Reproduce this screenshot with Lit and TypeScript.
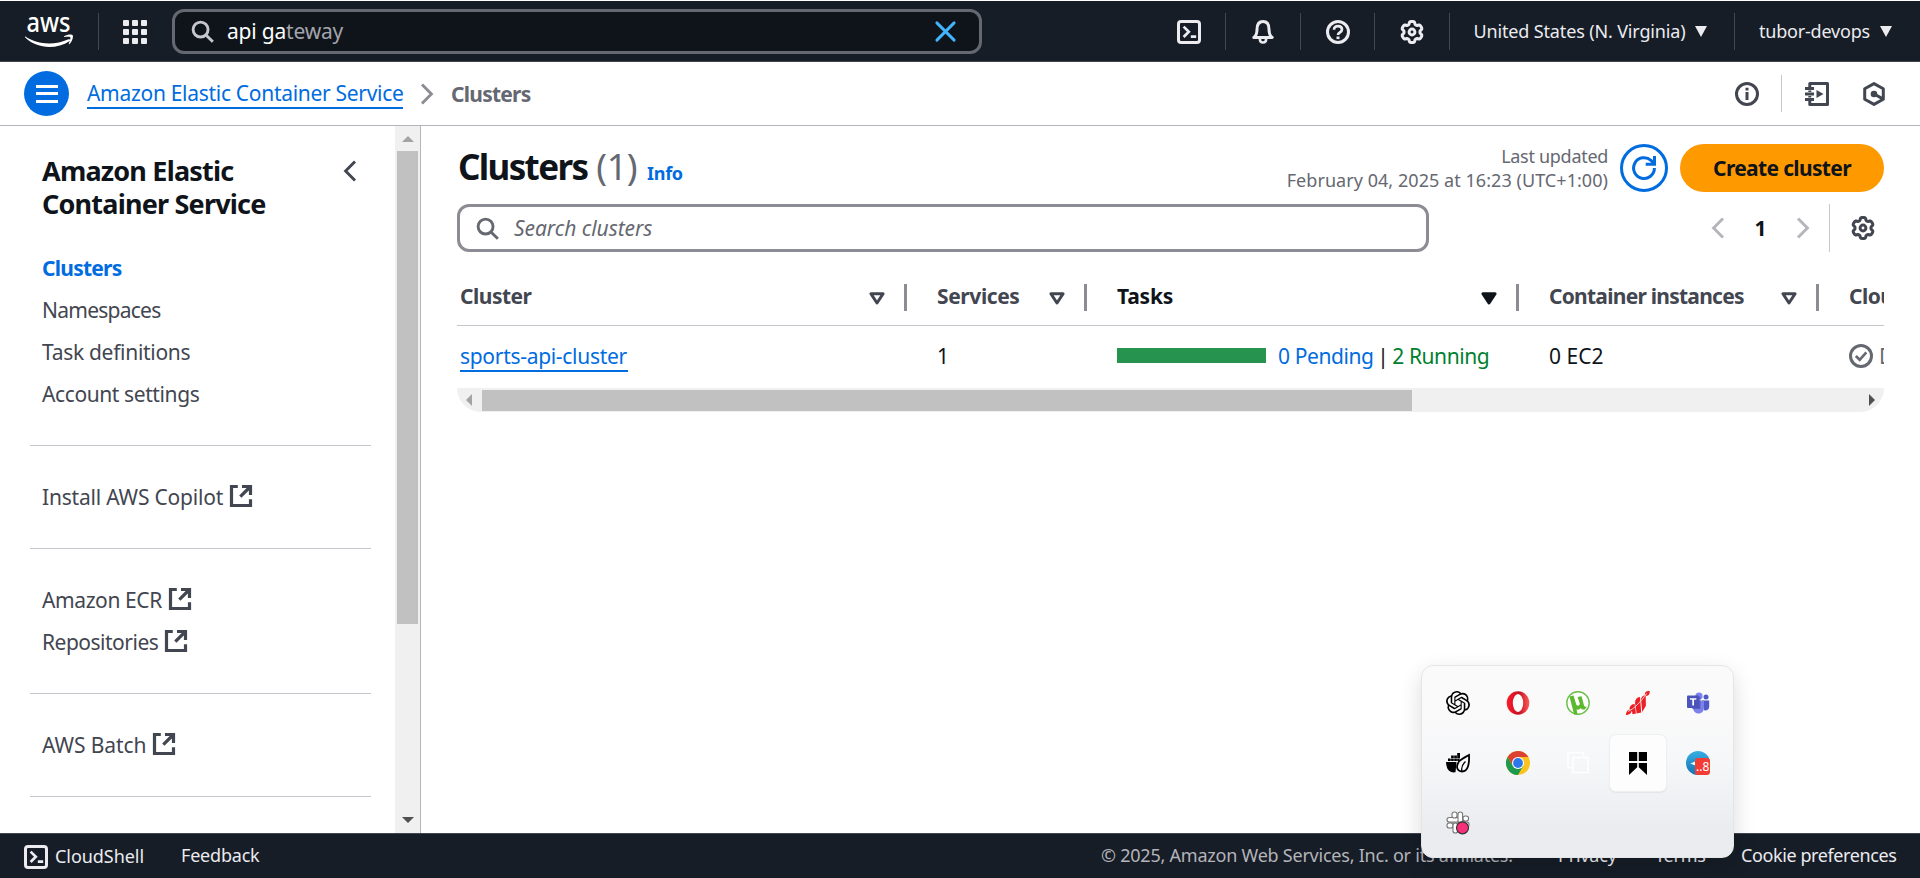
import { LitElement, html, css, svg, nothing } from "lit";
import { customElement } from "lit/decorators.js";

/** Outline of a gear with six rounded lobes, centred in a 24 unit box. */
const gearPath = (() => {
  const pts: string[] = [];
  for (let i = 0; i < 120; i++) {
    const a = (i / 120) * Math.PI * 2 - Math.PI / 2;
    const lobe = Math.tanh(2.2 * (Math.cos(6 * (a + Math.PI / 2)) + 0.25)) / Math.tanh(2.75);
    const r = 9.2 + 1.3 * lobe;
    pts.push(`${(12 + r * Math.cos(a)).toFixed(2)} ${(12 + r * Math.sin(a)).toFixed(2)}`);
  }
  return `M${pts.join("L")}Z`;
})();

const stroke = (body: unknown, w = 3) => html`<svg class="ic" viewBox="0 0 24 24" fill="none" stroke="currentColor" stroke-width=${w}>${body}</svg>`;

const icons = {
  search: stroke(svg`<circle cx="10" cy="10" r="7.8"/><path d="M15.300 15.300l7.500 7.500"/>`, 3),
  shell: stroke(svg`<rect x="1.5" y="1.5" width="21" height="21" rx="2.6"/><path d="M6.6 6.6l5.2 5.2-5.2 5.2M13.8 16.7h5.4" stroke-width="2.7"/>`),
  bell: stroke(svg`<path stroke-linejoin="round" d="M2.8 17.4C5.2 15.6 6 13.6 6 9.4 6 4.6 8.2 1.6 12 1.6s6 3 6 7.8c0 4.2.8 6.2 3.2 8z"/><path d="M8.8 18.5c0 2.7 1.2 4 3.2 4s3.2-1.3 3.2-4" stroke-width="2.6"/>`),
  help: stroke(svg`<circle cx="12" cy="12" r="10.5"/><path d="M8 9.8C8 7.4 9.6 6.2 12 6.2s4 1.3 4 3.4c0 2.700-4 2.900-4 5.400" stroke-width="2.700"/><path d="M10.500 17.800h3" stroke-width="2.600"/>`),
  gear: stroke(svg`<path d=${gearPath} stroke-linejoin="round"/><circle cx="12" cy="12" r="2.9"/>`, 3),
  info: stroke(svg`<circle cx="12" cy="12" r="10.5"/><path d="M12 10v8M12 5.800v2.600"/>`),
  notebook: stroke(svg`<path stroke-linejoin="round" d="M4.8 5V1.500h17.700v21H4.800V19M4.800 8.500v1.500M4.800 14v1.500" /><path d="M0 6.500h9M0 12h9M0 17.500h9" stroke-width="2.800"/><path d="M11.500 8v8l7-4z" fill="currentColor" stroke="none"/>`, 3),
  hex: stroke(svg`<path stroke-linejoin="round" d="M12 1.600l9.300 5.100v10.600L12 22.400l-9.300-5.100V6.700z"/><circle cx="12" cy="12" r="3.300" fill="currentColor" stroke="none"/><path d="M12 12l8.500 4.600"/>`),
  left: stroke(svg`<path d="M17 2.500L7.600 12l9.400 9.500"/>`, 2.9),
  right: stroke(svg`<path d="M7 2.500l9.400 9.500L7 21.500"/>`, 2.9),
  external: stroke(svg`<path d="M8.800 2.500H2.500v19h19v-6.300"/><path d="M13 2.500h8.500V11M21 3L11.300 12.700"/>`, 3.2),
  refresh: stroke(svg`<path d="M22.400 12A10.400 10.400 0 1 1 19 4.400l3 3"/><path d="M22.500 0v8.300h-8.800"/>`),
  check: stroke(svg`<circle cx="12" cy="12" r="10.500"/><path d="M6.800 12l3.900 3.800 6.600-7.400" stroke-width="2.600"/>`),
  close: stroke(svg`<path stroke-linecap="round" d="M3 3l18 18M21 3L3 21"/>`, 3),
};

const caret = html`<svg class="caret" viewBox="0 0 12 11"><path d="M0 0h12L6 11z" fill="currentColor"/></svg>`;
const sortCaret = (active: boolean) => html`<svg class="sort" viewBox="0 0 16 13"><path d="M1.900 1.700h12.200L8 11z" fill=${active ? "currentColor" : "none"} stroke="currentColor" stroke-width="3" stroke-linejoin="round"/></svg>`;

const tray = [
  svg`<path d="M22.280 9.820a5.985 5.985 0 0 0-.516-4.911 6.046 6.046 0 0 0-6.510-2.900A6.065 6.065 0 0 0 4.981 4.182a5.985 5.985 0 0 0-3.998 2.900 6.046 6.046 0 0 0 .743 7.097 5.980 5.980 0 0 0 .511 4.911 6.051 6.051 0 0 0 6.515 2.900A5.985 5.985 0 0 0 13.260 24a6.056 6.056 0 0 0 5.772-4.206 5.989 5.989 0 0 0 3.998-2.900 6.056 6.056 0 0 0-.748-7.073zm-9.022 12.608a4.476 4.476 0 0 1-2.876-1.041l.142-.080 4.778-2.758a.795.795 0 0 0 .393-.681v-6.737l2.020 1.169a.071.071 0 0 1 .038.052v5.583a4.504 4.504 0 0 1-4.495 4.494zm-9.661-4.125a4.471 4.471 0 0 1-.535-3.014l.142.085 4.783 2.758a.771.771 0 0 0 .781 0l5.843-3.369v2.332a.080.080 0 0 1-.033.062L9.740 19.950a4.499 4.499 0 0 1-6.141-1.646zM2.341 7.896a4.485 4.485 0 0 1 2.366-1.973V11.600a.766.766 0 0 0 .388.677l5.814 3.354-2.020 1.169a.076.076 0 0 1-.071 0l-4.830-2.787A4.504 4.504 0 0 1 2.341 7.872zm16.596 3.856L13.104 8.364 15.119 7.200a.076.076 0 0 1 .071 0l4.830 2.791a4.494 4.494 0 0 1-.677 8.104v-5.677a.790.790 0 0 0-.407-.667zm2.011-3.023l-.142-.085-4.774-2.782a.776.776 0 0 0-.785 0L9.409 9.230V6.897a.066.066 0 0 1 .028-.062l4.830-2.787a4.499 4.499 0 0 1 6.680 4.660zM8.307 12.863l-2.020-1.164a.080.080 0 0 1-.038-.057V6.074a4.499 4.499 0 0 1 7.376-3.454l-.142.081L8.704 5.459a.795.795 0 0 0-.393.681zm1.098-2.365l2.602-1.500 2.607 1.500v2.999l-2.597 1.500-2.607-1.500z"/>`,
  svg`<defs><linearGradient id="op" x1="0" y1="0" x2="1" y2="0"><stop offset="0" stop-color="#ff1b2d"/><stop offset=".55" stop-color="#c4101f"/><stop offset="1" stop-color="#ff5a58"/></linearGradient></defs><ellipse cx="12" cy="12" rx="11.300" ry="11.700" fill="url(#op)"/><ellipse cx="12" cy="12" rx="5.200" ry="9" fill="#fafafa"/>`,
  svg`<circle cx="12" cy="12" r="11.200" fill="#fff" stroke="#6cc04a" stroke-width="1.400"/><path d="M3.500 5.500l4-1 2.700 8.800c.8 2.300 3.900 1.700 3.500-1L11.600 6l4-.8 2.200 8.500c.4 1.600 1.300 2.300 3.200 2l-2.300 2.800c-1.900.3-3.200-.2-4-1.600-1 1.500-2.500 2-4.200 1.600l1.200 5h-3.600z" fill="#5cb82c"/>`,
  svg`<path d="M0 24c0-3 1.500-5.800 5.500-5.800C6.500 21.500 3.500 24 0 24zM3.400 17.600c.6-3 2.600-4.600 5.200-4.600l1.400 9.500-3.600.700c0-2.800-.600-4.600-3-5.600zM9 12c0-3.500 1.800-5.600 5-5.900l1.200 15.300-4.500 1zM15 8c.6-2.700 2.600-4 4.700-3.700l.200 10.500-3.700 6.200zM18.800 3.600C18.800 1 20.800-.4 23.800.300 24 2.800 22.600 4.800 20.600 5z" fill="#ec2024"/><path d="M2 20.500C8 18 15.500 10 20.500 2.500" stroke="#fafafa" stroke-width=".8" fill="none"/>`,
  svg`<circle cx="13" cy="5" r="3.600" fill="#7b83eb"/><circle cx="20" cy="6" r="2.500" fill="#5059c9"/><path d="M16 9.500h7.200v6.200a3.700 3.700 0 0 1-5 3.500z" fill="#5059c9"/><path d="M7 9.500h11v7c0 3.700-2.200 6-5.500 6S7 20 7 16.500z" fill="#7b83eb"/><rect x="6" y="6" width="8.500" height="12" fill="#3b4399" opacity=".55"/><rect x="1" y="4.500" width="12.300" height="12.500" rx="1" fill="#4b53bc"/><path d="M4 8h6.300M7.150 8v6.500" stroke="#fff" stroke-width="1.700"/>`,
  svg`<path d="M0 11h10.500l-1 10.300C4 22 .5 19.500 0 11zM2 10V7.500h2.700V10zM5.100 10V7.500h2.700V10zM8.200 10V7.500h2.700V10zM5.100 7V4.500h2.700V7zM8.200 7V4.500h2.700V7zM11.200 7V2H14v5zM11.200 10V7.500H14L13 10z"/><path d="M23 4c.4 8-.6 16.500-7 16.500-3.500 0-5.500-2.600-4.800-6C12.200 9.500 16 8 23 4z" fill="#fafafa" stroke="#000" stroke-width="1.800"/><path d="M16 20.500c-1-4 .2-7 3.500-10" fill="none" stroke="#000" stroke-width="1.300"/>`,
  svg`<circle cx="12" cy="12" r="12" fill="#fcc31e"/><path d="M12 12L6.800 15 1.600 6A12 12 0 0 1 22.400 6H12z" fill="#dd4132"/><path d="M6.800 15L1.600 6A12 12 0 0 0 12 24l5.200-9z" fill="#1c9a50"/><circle cx="12" cy="12" r="6" fill="#fff"/><circle cx="12" cy="12" r="4.900" fill="#2b78ea"/>`,
  svg`<g fill="none" stroke="#fff" stroke-width="1.500"><path d="M6 16.500H2v-15h15.500V5"/><rect x="7" y="6.500" width="15" height="15"/></g>`,
  svg`<path d="M3 1h8.200v9H3zM12.800 1H21v9h-8.200zM3 12h8.200v4.300L3 24zM12.800 12H21v12l-8.200-7.700z"/>`,
  svg`<defs><linearGradient id="tg" x1="0" y1="0" x2="0" y2="1"><stop offset="0" stop-color="#37aee2"/><stop offset="1" stop-color="#1474b5"/></linearGradient></defs><circle cx="12" cy="12" r="12" fill="url(#tg)"/><path d="M4.500 12.500l6-2.500v5z" fill="#fff"/><rect x="9" y="7" width="15" height="17" rx="3.200" fill="#f23c34"/><text x="10" y="20" fill="#fff" font-size="12">..8</text>`,
  svg`<g fill="#fff" stroke="#777" stroke-width="1.100"><rect x="1" y="6.500" width="12" height="4.600" rx="2.300"/><rect x="12" y="1" width="4.600" height="11" rx="2.300"/><rect x="6" y="1" width="5" height="6" rx="2.300"/><rect x="17" y="5" width="5.500" height="5" rx="2.300"/><rect x="1" y="12" width="6" height="5" rx="2.300"/><rect x="7" y="12" width="4.600" height="10" rx="2.300"/><rect x="12" y="11" width="11" height="5" rx="2.300"/></g><circle cx="16.500" cy="16.800" r="6" fill="#f72f78" stroke="#333" stroke-width="1.200"/>`,
];

const columns = [
  { label: "Cluster", cls: "k5", sort: 1 },
  { label: "Services", cls: "k4", sort: 1 },
  { label: "Tasks", cls: "k2", sort: 2 },
  { label: "Container instances", cls: "k8", sort: 1 },
  { label: "CloudWatch monitoring", cls: "k5", sort: 0 },
];

const navGroups = [
  [
    { label: "Clusters", cls: "current k8", ext: false },
    { label: "Namespaces", cls: "k8", ext: false },
    { label: "Task definitions", cls: "k3", ext: false },
    { label: "Account settings", cls: "k4", ext: false },
  ],
  [{ label: "Install AWS Copilot", cls: "k2", ext: true }],
  [
    { label: "Amazon ECR", cls: "k4", ext: true },
    { label: "Repositories", cls: "k5", ext: true },
  ],
  [{ label: "AWS Batch", cls: "k1", ext: true }],
];

@customElement("app-root")
export class AppRoot extends LitElement {
  static styles = css`
    :host { display: flex; flex-direction: column; box-sizing: border-box; width: 1920px; height: 878px; padding-top: 1px; overflow: hidden; position: relative; background: #fff; color: #0f141a; font: 400 21px/30px "Noto Sans", "Open Sans", sans-serif; white-space: nowrap; }
    * { box-sizing: border-box; }
    svg { display: block; flex: none; overflow: visible; }
    .ic { width: 24px; height: 24px; }
    .k1 { letter-spacing: -0.1px; } .k2 { letter-spacing: -0.2px; } .k3 { letter-spacing: -0.3px; }
    .k4 { letter-spacing: -0.4px; } .k5 { letter-spacing: -0.5px; } .k8 { letter-spacing: -0.75px; }
    .grow { flex: 1; }

    header { display: flex; align-items: center; flex: none; height: 61px; padding: 0 28px 0 25px; background: #161d26; border-bottom: 1px solid #424650; color: #ebebf0; font-size: 18px; }
    .logo { width: 48px; height: 34px; margin-right: 25px; }
    .rule { width: 1px; height: 37px; background: #424650; flex: none; }
    .apps { display: grid; grid-template-columns: repeat(3, 6px); gap: 3px; width: 24px; margin: 1px 25px 0 24px; }
    .apps i { height: 6px; border-radius: 1px; background: #ebebf0; }
    .find { display: flex; align-items: center; width: 810px; height: 45px; padding: 0 22px 0 16px; margin-top: 1px; border: 3px solid #656871; border-radius: 12px; background: #0f141a; color: #fff; font-size: 21px; }
    .find .ic { width: 23px; height: 23px; color: #c6c6cd; }
    .find .clear .ic { color: #42b4ff; }
    .find p { margin: 0 0 1px 13px; flex: 1; }
    .find em { font-style: normal; color: #a4a4ad; }
    .tools { display: flex; align-items: center; margin-left: 195px; }
    .tools .ic { margin-top: 2px; }
    .tools .a { margin: 0 24.5px 0 25px; } .tools .first { margin-right: 24px; }
    .menu { display: flex; align-items: center; padding-bottom: 1px; letter-spacing: -0.150px; }
    .region { padding-left: 24px; }
    .user { padding-left: 24px; letter-spacing: -0.200px; }
    .caret { width: 12px; height: 11px; margin: 2px 0 0 10px; }

    .crumbs { display: flex; align-items: center; flex: none; height: 64px; padding: 0 34px 0 24px; border-bottom: 1px solid #b4b4bb; color: #656871; }
    .burger { display: flex; flex-direction: column; justify-content: center; gap: 4.500px; align-items: center; width: 45px; height: 45px; border-radius: 50%; background: #006ce0; }
    .burger i { width: 22px; height: 3px; background: #fff; }
    .crumbs a { margin: 1px 12px 0 18px; color: #006ce0; width: 316px; border-bottom: 2px solid; line-height: 28px; }
    .crumbs > .ic { color: #8c8c94; }
    .crumbs b { margin-left: 12px; }
    .page-tools { display: flex; align-items: center; color: #424650; }
    .page-tools .rule { background: #c6c6cd; margin: 0 23px 0 22px; }
    .page-tools .ic:last-child { margin-left: 33px; }

    .body { display: flex; flex: 1; min-height: 0; }
    aside { display: flex; width: 421px; border-right: 1px solid #b4b4bb; }
    nav { width: 395px; overflow: hidden; padding: 28px 24px 0 30px; color: #424650; }
    .title { display: flex; justify-content: space-between; padding: 0 9px 0 12px; margin-bottom: 26px; }
    h2 { margin: 0; font: 700 27px/33px "Noto Sans", sans-serif; color: #0f141a; letter-spacing: -0.800px; }
    .title .ic { margin: 5px 0 0; }
    .item { display: flex; align-items: center; height: 42px; padding-left: 12px; gap: 6px; }
    .item span { padding-top: 1px; }
    .current { color: #006ce0; font-weight: 700; }
    hr { border: 0; height: 1px; background: #c6c6cd; margin: 31px 0 29px; }
    .vbar { display: flex; flex-direction: column; width: 25px; padding: 10px 2px 10px; background: #f0f0f0; align-items: center; }
    .vbar .up { border: 6px solid transparent; border-bottom-color: #a3a3a3; border-top: 0; }
    .vbar .thumb { width: 21px; height: 473px; margin: 9px 0 auto; background: #c1c1c1; }
    .vbar .down { border: 6px solid transparent; border-top-color: #505050; border-bottom: 0; }

    main { flex: 1; min-width: 0; padding: 18px 36px 0; }
    .head { display: flex; align-items: center; height: 48px; }
    h1 { display: flex; align-items: baseline; margin: 0 0 2px 1px; font: 700 35px/44px "Noto Sans", sans-serif; letter-spacing: -1.650px; }
    h1 span { font-size: 36px; font-weight: 400; color: #656871; margin-left: 9px; letter-spacing: -0.500px; }
    h1 a { margin-left: 10px; font: 700 18px/24px "Noto Sans", sans-serif; letter-spacing: -0.300px; color: #006ce0; }
    .stamp { text-align: right; font-size: 18px; line-height: 24px; color: #656871; margin: 0 12px 1px 0; letter-spacing: 0.050px; }
    .refresh { display: grid; place-items: center; width: 48px; height: 48px; border: 3px solid #006ce0; border-radius: 50%; color: #006ce0; }
    .create { display: grid; place-items: center; width: 204px; height: 48px; margin-left: 12px; border-radius: 24px; background: #ff9900; font-weight: 700; letter-spacing: -0.650px; }
    .filter { display: flex; align-items: center; margin-top: 12px; height: 48px; color: #424650; }
    .box { display: flex; align-items: center; width: 972px; height: 48px; padding-left: 16px; border: 3px solid #8c8c94; border-radius: 12px; color: #656871; font-style: italic; letter-spacing: -0.050px; gap: 15px; }
    .box .ic { width: 23px; height: 23px; }
    .pager { display: flex; align-items: center; color: #b4b4bb; }
    .pager b { width: 61px; text-align: center; color: #0f141a; }
    .filter .rule { height: 48px; background: #c6c6cd; margin: 0 21px 0 14px; }
    .filter > .ic { margin-right: 9px; }

    .table { margin-top: 15px; overflow: hidden; }
    .row { display: grid; grid-template-columns: 450px 180px 432px 300px 300px; width: 1662px; }
    .th { height: 59px; border-bottom: 1px solid #c6c6cd; color: #424650; font-weight: 700; }
    .cell { display: flex; align-items: center; padding-left: 30px; }
    .cell:first-child { padding-left: 3px; }
    .th .cell span { flex: 1; }
    .active { color: #0f141a; }
    .sort { width: 16px; height: 13px; margin-top: 5px; }
    .sep { width: 3px; height: 27px; margin: 3px 0 0 19px; background: #8c8c94; }
    .td { height: 62px; padding-bottom: 3px; }
    .name { color: #006ce0; border-bottom: 2px solid; line-height: 28px; width: 168px; margin-top: 2px; }
    .bar { width: 149px; height: 15px; margin-right: 12px; background: #26944f; }
    .pending { color: #006ce0; } .running { color: #00802f; }
    .sep2 { margin: 0 3.500px; }
    .state { color: #656871; gap: 6px; }
    .hbar { display: flex; align-items: center; height: 24px; padding: 0 9px; background: #f0f0f0; border-radius: 0 0 24px 24px; }
    .hbar .prev { border: 6px solid transparent; border-right-color: #a3a3a3; border-left: 0; }
    .hbar .thumb { width: 930px; height: 21px; margin: 0 auto 0 10px; background: #c1c1c1; }
    .hbar .next { border: 6px solid transparent; border-left-color: #505050; border-right: 0; }

    footer { display: flex; align-items: center; flex: none; height: 45px; padding: 0 23px 2px 24px; border-top: 1px solid #424650; background: #161d26; color: #ebebf0; font-size: 18px; }
    .shell { display: flex; align-items: center; gap: 7px; width: 157px; }
    .shell .ic { margin-top: 4px; } .shell span { margin-top: 1px; letter-spacing: -0.050px; }
    .copy { width: 457px; color: #b4b4bb; letter-spacing: -0.230px; }
    .privacy { width: 97px; } .terms { width: 86px; } .cookie { width: 156px; }

    .tray { position: absolute; left: 1421px; top: 665px; width: 313px; height: 193px; display: grid; grid-template-columns: repeat(5, 60px); grid-auto-rows: 60px; place-items: center; align-content: start; padding: 7px 0 0 6px; border: 1px solid #e4e5e7; border-radius: 12px; background: linear-gradient(#fafafb 20%, #f6f7f8 50%, #ebecf0 85%); box-shadow: 0 8px 22px rgba(0, 0, 0, 0.14); }
    .tray div { display: grid; place-items: center; width: 58px; height: 58px; border-radius: 6px; }
    .tray .hot { width: 56px; height: 56px; background: #fdfdfd; box-shadow: 0 0 0 1px #eeefef, 0 1px 1px 1px #e4e5e6; }
    .tray svg { width: 24px; height: 24px; font-family: "Noto Sans", sans-serif; }
  `;

  render() {
    return html`
      <header>
        <svg class="logo" viewBox="0 0 48 34" fill="#fff">
          <text x="1.500" y="17.500" font-size="27" font-weight="500" textLength="44" lengthAdjust="spacingAndGlyphs">aws</text>
          <path d="M.4 22.600C13 31.200 30 31.500 43.500 25.300c1.500-.600 2.500.800 1.200 1.700C31 36 12 35 .2 23.600c-.6-.6-.2-1.200.2-1z"/>
          <path d="M47.700 21.200c.8 1.200-.4 6.300-3.200 8.800-.5.400-.9.100-.700-.400.8-1.800 2-5.300 1.500-6.300-.700-1-4.300-.500-6-.300-.5.100-.6-.3-.1-.7 2.800-2 7.600-2.300 8.500-1.100z"/>
        </svg>
        <span class="rule"></span>
        <div class="apps">${Array.from({ length: 9 }, () => html`<i></i>`)}</div>
        <div class="find">${icons.search}<p class="k2">api ga<em>teway</em></p><span class="clear">${icons.close}</span></div>
        <div class="tools">
          <span class="first">${icons.shell}</span><span class="rule"></span>
          <span class="a">${icons.bell}</span><span class="rule"></span>
          <span class="a">${icons.help}</span><span class="rule"></span>
          <span class="a">${icons.gear}</span><span class="rule"></span>
        </div>
        <div class="menu region">United States (N. Virginia)${caret}</div>
        <span class="grow"></span><span class="rule"></span>
        <div class="menu user">tubor-devops${caret}</div>
      </header>
      <div class="crumbs">
        <div class="burger"><i></i><i></i><i></i></div>
        <a class="k3">Amazon Elastic Container Service</a>${icons.right}<b class="k8">Clusters</b>
        <span class="grow"></span>
        <div class="page-tools">${icons.info}<span class="rule"></span>${icons.notebook}${icons.hex}</div>
      </div>
      <div class="body">
        <aside>
          <nav>
            <div class="title"><h2>Amazon Elastic<br />Container Service</h2>${icons.left}</div>
            ${navGroups.map((g) => html`${g.map((n) => html`<div class="item"><span class=${n.cls}>${n.label}</span>${n.ext ? icons.external : nothing}</div>`)}<hr />`)}
          </nav>
          <div class="vbar"><i class="up"></i><i class="thumb"></i><i class="down"></i></div>
        </aside>
        <main>
          <div class="head">
            <h1>Clusters <span>(1)</span><a>Info</a></h1>
            <span class="grow"></span>
            <div class="stamp"><span class="k3">Last updated</span><br />February 04, 2025 at 16:23 (UTC+1:00)</div>
            <div class="refresh">${icons.refresh}</div>
            <div class="create">Create cluster</div>
          </div>
          <div class="filter">
            <div class="box">${icons.search}<span>Search clusters</span></div>
            <span class="grow"></span>
            <div class="pager">${icons.left}<b>1</b>${icons.right}</div>
            <span class="rule"></span>${icons.gear}
          </div>
          <div class="table">
            <div class="row th">
              ${columns.map((c) => html`<div class="cell ${c.sort === 2 ? "active" : ""}"><span class=${c.cls}>${c.label}</span>${c.sort ? sortCaret(c.sort === 2) : nothing}${c.sort ? html`<i class="sep"></i>` : nothing}</div>`)}
            </div>
            <div class="row td">
              <div class="cell"><a class="name k3">sports-api-cluster</a></div>
              <div class="cell">1</div>
              <div class="cell"><i class="bar"></i><span class="pending k4">0 Pending</span><span class="sep2">|</span><span class="running k4">2 Running</span></div>
              <div class="cell">0 EC2</div>
              <div class="cell state">${icons.check}<span>Default</span></div>
            </div>
          </div>
          <div class="hbar"><i class="prev"></i><i class="thumb"></i><i class="next"></i></div>
        </main>
      </div>
      <footer>
        <div class="shell">${icons.shell}<span>CloudShell</span></div>
        <span class="k2">Feedback</span>
        <span class="grow"></span>
        <span class="copy">© 2025, Amazon Web Services, Inc. or its affiliates.</span>
        <span class="privacy k2">Privacy</span><span class="terms k2">Terms</span><span class="cookie k4">Cookie preferences</span>
      </footer>
      <div class="tray">${tray.map((t, i) => html`<div class=${i === 8 ? "hot" : ""}><svg viewBox="0 0 24 24">${t}</svg></div>`)}</div>
    `;
  }
}
